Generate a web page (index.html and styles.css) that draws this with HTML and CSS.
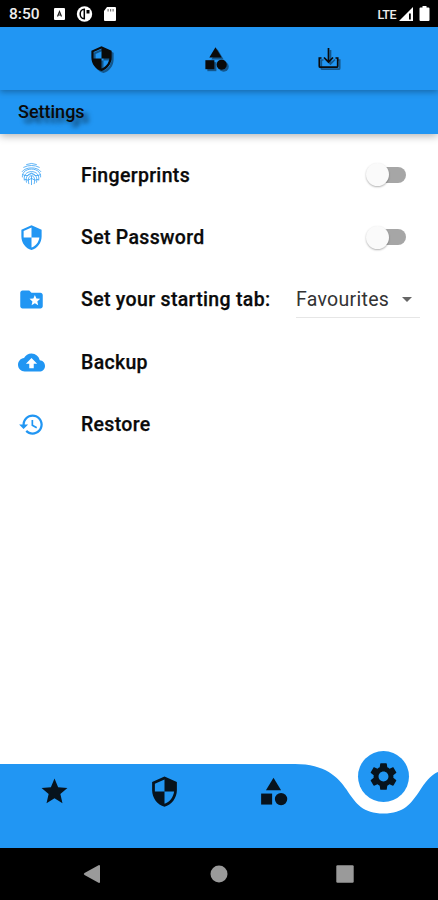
FILE: index.html
```html
<!DOCTYPE html>
<html lang="en">
<head>
<meta charset="utf-8">
<title>Settings</title>
<link rel="stylesheet" href="styles.css">
</head>
<body>
<svg class="symbols" aria-hidden="true">
  <symbol id="shield" viewBox="0 0 24 24"><path d="M12 1L3 5v6c0 5.55 3.84 10.74 9 12 5.16-1.26 9-6.45 9-12V5l-9-4zm0 10.99h7c-.53 4.12-3.28 7.79-7 8.94V12H5V6.3l7-3.11v8.8z"/></symbol>
  <symbol id="category" viewBox="0 0 24 24"><path d="M12 2l-5.5 9h11z"/><circle cx="17.5" cy="17.5" r="4.5"/><path d="M3 13.500h8v8H3z"/></symbol>
</svg>
<div class="phone">
  <header class="status">
    <span class="clock">8:50</span>
    <svg class="notices" viewBox="0 0 64 18">
      <rect x="1" y="3" width="11" height="12" rx="1" fill="#fff"/>
      <path d="M4.500 11.500l2-5 2 5M5 10h3" fill="none" stroke="#222" stroke-width="1.200"/>
      <circle cx="31.500" cy="9" r="7.700" fill="#fff"/>
      <path d="M31.300 4.300c-5.500 0-5.500 9.400 0 9.400z" fill="none" stroke="#000" stroke-width="1.500"/>
      <path d="M33.500 5h3v3.500h-3z" fill="#000"/>
      <path d="M54 2h8q1 0 1 1v12q0 1-1 1H52q-1 0-1-1V6z" fill="#fff"/>
      <path d="M54.500 4h1.200v2.500h-1.200zM57 4h1.200v2.500H57zM59.500 4h1.200v2.500h-1.200z" fill="#777"/>
    </svg>
    <span class="network">LTE</span>
    <svg class="signals" viewBox="0 0 32 18">
      <path d="M0 16L14 2v14z" fill="#fff"/><path d="M10 8.500h1.800v6H10z" fill="#000"/>
      <path d="M23.500 2.500V1h4v1.500h2q1 0 1 1V15q0 1-1 1h-8q-1 0-1-1V3.500q0-1 1-1z" fill="#fff"/>
    </svg>
  </header>

  <nav class="tabs">
    <svg class="tab-icon"><use href="#shield"/></svg>
    <svg class="tab-icon"><use href="#category"/></svg>
    <svg class="tab-icon tab-icon-line" viewBox="0 0 27 27"><path d="M13.500 3v13.500M9 12.500l4.500 4.500 4.500-4.500M6.500 13H4.300v8.200q0 1 1 1h16.400q1 0 1-1V13h-2.200"/></svg>
  </nav>
  <h1 class="title"><span>Settings</span></h1>

  <main class="list">
    <div class="row">
      <svg class="row-icon fingerprint" viewBox="0 0 24 24"><path d="M6.500 2.200Q12-.2 17.500 2.200M3.500 5.200Q12 1 20.500 5.200M2 9.800C6 4.200 18 4.200 22 9.800M2.500 15.500C1.500 4 22.500 4 21.500 15.500M4.500 18.800C2 6.300 22 6.300 19.500 18.800M6.800 21C3.800 8.500 20.200 8.500 17.200 21M9.300 22.500C6 10.800 18 10.800 14.700 22.500M12 14v9.500M2.500 12.500Q8 15.500 12 11Q16 15.500 21.500 12.500M4.500 17.500Q9 20 12 16.500Q15 20 19.500 17.500"/></svg>
      <span class="label">Fingerprints</span>
      <span class="switch"></span>
    </div>
    <div class="row">
      <svg class="row-icon"><use href="#shield"/></svg>
      <span class="label">Set Password</span>
      <span class="switch"></span>
    </div>
    <div class="row">
      <svg class="row-icon" viewBox="0 0 24 24"><path d="M20 6h-8l-2-2H4c-1.100 0-1.990.9-1.990 2L2 18c0 1.100.9 2 2 2h16c1.100 0 2-.9 2-2V8c0-1.100-.9-2-2-2zm-2.060 11L15 15.280 12.060 17l.78-3.330-2.590-2.240 3.410-.29L15 8l1.340 3.140 3.410.29-2.590 2.240.78 3.330z"/></svg>
      <span class="label">Set your starting tab:</span>
      <span class="select">Favourites<svg class="caret" viewBox="0 0 10 5"><path d="M0 0h10L5 5z"/></svg></span>
    </div>
    <div class="row">
      <svg class="row-icon" viewBox="0 0 24 24"><path d="M19.350 10.040C18.670 6.590 15.640 4 12 4 9.110 4 6.600 5.640 5.350 8.040 2.340 8.360 0 10.910 0 14c0 3.310 2.690 6 6 6h13c2.760 0 5-2.240 5-5 0-2.640-2.050-4.780-4.650-4.960zM14 13v4h-4v-4H7l5-5 5 5h-3z"/></svg>
      <span class="label">Backup</span>
    </div>
    <div class="row">
      <svg class="row-icon" viewBox="0 0 24 24"><path d="M13 3c-4.970 0-9 4.030-9 9H1l3.890 3.890.07.14L9 12H6c0-3.870 3.130-7 7-7s7 3.130 7 7-3.130 7-7 7c-1.930 0-3.680-.79-4.940-2.060l-1.420 1.420C8.270 19.990 10.510 21 13 21c4.970 0 9-4.030 9-9s-4.030-9-9-9zm-1 5v5l4.280 2.540.72-1.210-3.500-2.080V8H12z"/></svg>
      <span class="label">Restore</span>
    </div>
  </main>

  <nav class="bottom">
    <svg class="wave" viewBox="0 0 438 84"><path d="M0 0H295C325 0 338 13 346.500 25.500C356 40 363 49.500 383.500 49.500S411 40 420.500 25.500C428 14 433 10 438 8V84H0z"/></svg>
    <span class="item"><svg class="item-icon star" viewBox="0 0 24 24"><path d="M12 17.270L18.180 21l-1.640-7.030L22 9.240l-7.190-.61L12 2 9.190 8.630 2 9.240l5.460 4.730L5.820 21z"/></svg></span>
    <span class="item"><svg class="item-icon"><use href="#shield"/></svg></span>
    <span class="item"><svg class="item-icon"><use href="#category"/></svg></span>
    <span class="item"><span class="bubble"><svg class="item-icon" viewBox="0 0 24 24"><path d="M19.140 12.940c.04-.3.06-.61.06-.94 0-.32-.02-.64-.07-.94l2.030-1.580c.18-.14.23-.41.12-.61l-1.920-3.320c-.12-.22-.37-.29-.59-.22l-2.390.96c-.5-.38-1.030-.7-1.620-.94l-.36-2.540c-.04-.24-.24-.41-.48-.41h-3.840c-.24 0-.43.17-.47.41l-.36 2.540c-.59.24-1.130.57-1.620.94l-2.390-.96c-.22-.08-.47 0-.59.22L2.740 8.870c-.12.21-.08.47.12.61l2.030 1.580c-.05.3-.09.63-.09.94s.02.64.07.94l-2.030 1.580c-.18.14-.23.41-.12.61l1.920 3.320c.12.22.37.29.59.22l2.390-.96c.5.38 1.030.7 1.620.94l.36 2.540c.05.24.24.41.48.41h3.840c.24 0 .44-.17.47-.41l.36-2.540c.59-.24 1.130-.56 1.620-.94l2.390.96c.22.08.47 0 .59-.22l1.920-3.320c.12-.22.07-.47-.12-.61l-2.010-1.580zM12 15.600c-1.980 0-3.600-1.620-3.600-3.600s1.620-3.600 3.600-3.600 3.600 1.620 3.600 3.600-1.620 3.600-3.600 3.600z"/></svg></span></span>
  </nav>

  <footer class="system">
    <svg class="key" viewBox="0 0 18 20"><path d="M1.500 9L16 1q1 0 1 1v16q0 1-1 1L1.500 11q-1.500-1 0-2z"/></svg>
    <svg class="key" viewBox="0 0 18 20"><circle cx="9" cy="10" r="8.500"/></svg>
    <svg class="key" viewBox="0 0 18 20"><rect x=".3" y="1.300" width="17.400" height="17.400" rx="1.200"/></svg>
  </footer>
</div>
</body>
</html>
```
FILE: styles.css
```css
* { box-sizing: border-box; }
body { margin: 0; font-family: Roboto, sans-serif; background: #fff; }
.symbols { position: absolute; width: 0; height: 0; }
.phone { width: 438px; height: 900px; display: flex; flex-direction: column; overflow: hidden; }

.status { height: 27px; flex: none; background: #000; color: #eee; display: flex; align-items: center; padding: 1px 7px 0 9px; }
.clock { width: 44px; font-size: 15.5px; font-weight: 500; }
.notices { width: 64px; height: 18px; }
.network { margin-left: auto; font-size: 12.5px; font-weight: 500; letter-spacing: -0.5px; }
.signals { width: 32px; height: 18px; margin-left: 3px; }

.tabs { height: 63px; flex: none; background: #2196f3; display: flex; align-items: center; justify-content: space-between; padding: 0 96px 0 88px; position: relative; z-index: 2; box-shadow: 0 2px 6px rgba(0, 0, 0, 0.3); }
.tab-icon { width: 27px; height: 27px; fill: #0a0a0a; filter: drop-shadow(2.5px 2px 0.7px rgba(0, 0, 0, 0.42)); }
.tab-icon-line { fill: none; stroke: #0a0a0a; stroke-width: 1.7; }

.title { height: 44px; flex: none; margin: 0; padding: 0 0 1px 18px; background: #2196f3; display: flex; align-items: center; font-size: 18px; font-weight: 500; color: #0a0a0a; text-shadow: 5px 5px 4px rgba(0, 0, 0, 0.5); position: relative; z-index: 1; box-shadow: 0 2px 8px rgba(0, 0, 0, 0.3); }

.list { flex: 1; padding-top: 10px; }
.row { height: 62.4px; display: flex; align-items: center; padding: 0 18px; }
.row-icon { width: 27px; height: 27px; margin-right: 36px; fill: #2196f3; }
.fingerprint { fill: none; stroke: #2196f3; stroke-width: 0.75; width: 23px; height: 24px; margin: 0 38px 2px 2px; }
.label { font-size: 19.5px; font-weight: 500; letter-spacing: 0.32px; color: #0a0a0a; -webkit-text-stroke: 0.25px #0a0a0a; }
.switch { width: 40px; height: 16px; margin: 0 14px 1px auto; border-radius: 8px; background: linear-gradient(90deg, transparent 12px, #a6a6a6 12px); display: flex; align-items: center; }
.switch::before { content: ""; width: 23px; height: 23px; border-radius: 50%; background: #fafafa; box-shadow: 0 1px 2px rgba(0, 0, 0, 0.3); }
.select { width: 124px; height: 36px; margin-left: auto; display: flex; align-items: center; font-size: 19.5px; letter-spacing: 0.3px; color: #333; border-bottom: 1px solid #e6e6e6; }
.caret { width: 10px; height: 5px; margin-left: 13px; fill: #666; }

.bottom { height: 84px; flex: none; display: flex; position: relative; }
.wave { position: absolute; inset: 0; width: 438px; height: 84px; fill: #2196f3; }
.item { width: 109.5px; height: 55px; display: flex; align-items: center; justify-content: center; position: relative; }
.item-icon { width: 33px; height: 33px; fill: #07131d; }
.star { width: 31px; height: 31px; }
.bubble { width: 51px; height: 51px; flex: none; margin-top: -30px; border-radius: 50%; background: #2196f3; display: flex; align-items: center; justify-content: center; }

.system { height: 52px; flex: none; background: #000; display: flex; align-items: center; justify-content: space-between; padding: 0 84px 0 83px; }
.key { width: 18px; height: 20px; fill: #9a9a9a; }
```
